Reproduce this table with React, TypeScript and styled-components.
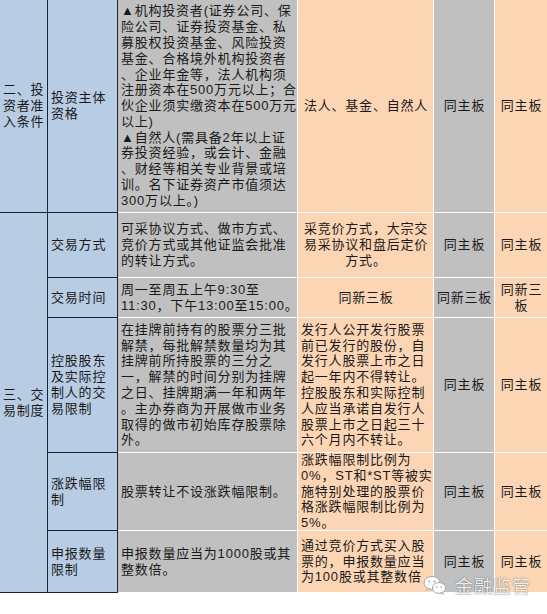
import React from 'react';
import styled, { createGlobalStyle } from 'styled-components';

type Tone = 'blue' | 'gray' | 'peach';

const GlobalStyle = createGlobalStyle`
  html, body {
    margin: 0;
    padding: 0;
    background: #ffffff;
  }
  * {
    box-sizing: border-box;
  }
`;

const DARK = '#1b2238';

const tones: Record<Tone, string> = {
  blue: '#b8cce4',
  gray: '#c0c0c0',
  peach: '#fcd5b4',
};

interface RowData {
  label: string[];
  rule: string[];
  detail: string[];
  detailCenter?: boolean;
  main: string[];
  other: string[];
}

const sections: { title: string[]; rows: RowData[] }[] = [
  {
    title: ['二、投', '资者准', '入条件'],
    rows: [
      {
        label: ['投资主体', '资格'],
        rule: [
          '▲机构投资者(证券公司、保',
          '险公司、证券投资基金、私',
          '募股权投资基金、风险投资',
          '基金、合格境外机构投资者',
          '、企业年金等，法人机构须',
          '注册资本在500万元以上；合',
          '伙企业须实缴资本在500万元',
          '以上)',
          '▲自然人(需具备2年以上证',
          '券投资经验，或会计、金融',
          '、财经等相关专业背景或培',
          '训。名下证券资产市值须达',
          '300万以上。)',
        ],
        detail: ['法人、基金、自然人'],
        detailCenter: true,
        main: ['同主板'],
        other: ['同主板'],
      },
    ],
  },
  {
    title: ['三、交', '易制度'],
    rows: [
      {
        label: ['交易方式'],
        rule: ['可采协议方式、做市方式、', '竞价方式或其他证监会批准', '的转让方式。'],
        detail: ['采竞价方式，大宗交', '易采协议和盘后定价', '方式。'],
        detailCenter: true,
        main: ['同主板'],
        other: ['同主板'],
      },
      {
        label: ['交易时间'],
        rule: ['周一至周五上午9:30至', '11:30，下午13:00至15:00。'],
        detail: ['同新三板'],
        detailCenter: true,
        main: ['同新三板'],
        other: ['同新三', '板'],
      },
      {
        label: ['控股股东', '及实际控', '制人的交', '易限制'],
        rule: [
          '在挂牌前持有的股票分三批',
          '解禁，每批解禁数量均为其',
          '挂牌前所持股票的三分之',
          '一，解禁的时间分别为挂牌',
          '之日、挂牌期满一年和两年',
          '。主办券商为开展做市业务',
          '取得的做市初始库存股票除',
          '外。',
        ],
        detail: [
          '发行人公开发行股票',
          '前已发行的股份，自',
          '发行人股票上市之日',
          '起一年内不得转让。',
          '控股股东和实际控制',
          '人应当承诺自发行人',
          '股票上市之日起三十',
          '六个月内不转让。',
        ],
        main: ['同主板'],
        other: ['同主板'],
      },
      {
        label: ['涨跌幅限', '制'],
        rule: ['股票转让不设涨跌幅限制。'],
        detail: [
          '涨跌幅限制比例为',
          '0%，ST和*ST等被实',
          '施特别处理的股票价',
          '格涨跌幅限制比例为',
          '5%。',
        ],
        main: ['同主板'],
        other: ['同主板'],
      },
      {
        label: ['申报数量', '限制'],
        rule: ['申报数量应当为1000股或其', '整数倍。'],
        detail: ['通过竞价方式买入股', '票的，申报数量应当', '为100股或其整数倍'],
        main: ['同主板'],
        other: ['同主板'],
      },
    ],
  },
];

function Lines({ lines }: { lines: string[] }) {
  return (
    <Text>
      {lines.map((l, i) => (
        <Line key={i}>{l}</Line>
      ))}
    </Text>
  );
}

function WeChatMark() {
  return (
    <svg width="24" height="20" viewBox="0 0 24 20">
      <ellipse cx="9" cy="8" rx="8" ry="6.6" fill="#fbfbfb" stroke="#a9a9a9" strokeWidth="1" />
      <path d="M4.2 12.6 L3.2 15.6 L7 13.6 Z" fill="#fbfbfb" stroke="#a9a9a9" strokeWidth="0.8" />
      <circle cx="6.2" cy="6.4" r="1" fill="#a9a9a9" />
      <circle cx="11.6" cy="6.4" r="1" fill="#a9a9a9" />
      <ellipse cx="16" cy="13" rx="6.6" ry="5.4" fill="#ffffff" stroke="#a9a9a9" strokeWidth="1" />
      <path d="M19.6 17 L20.6 19.4 L17.6 18 Z" fill="#ffffff" stroke="#a9a9a9" strokeWidth="0.8" />
      <circle cx="13.8" cy="11.8" r="0.85" fill="#a9a9a9" />
      <circle cx="18.2" cy="11.8" r="0.85" fill="#a9a9a9" />
    </svg>
  );
}

export default function App() {
  return (
    <>
      <GlobalStyle />
      <Page>
        <Table>
          {sections.map((s) =>
            s.rows.map((r, i) => (
              <React.Fragment key={s.title[0] + i}>
                {i === 0 && (
                  <Cell $tone="blue" $span={s.rows.length}>
                    <Lines lines={s.title} />
                  </Cell>
                )}
                <Cell $tone="blue">
                  <Lines lines={r.label} />
                </Cell>
                <Cell $tone="gray">
                  <Lines lines={r.rule} />
                </Cell>
                <Cell $tone="peach" $center={r.detailCenter}>
                  <Lines lines={r.detail} />
                </Cell>
                <Cell $tone="gray" $center>
                  <Lines lines={r.main} />
                </Cell>
                <Cell $tone="peach" $center $last>
                  <Lines lines={r.other} />
                </Cell>
              </React.Fragment>
            ))
          )}
        </Table>
        <Watermark>
          <WeChatMark />
          <MarkText>金融监管</MarkText>
        </Watermark>
      </Page>
    </>
  );
}

const Page = styled.div`
  position: relative;
  width: 547px;
  height: 614px;
  overflow: hidden;
  background: #ffffff;
  font-family: "Liberation Sans", "Noto Sans CJK SC", sans-serif;
  color: #1a1a1a;
`;

const Table = styled.div`
  display: grid;
  width: 547px;
  grid-template-columns: 48px 70px 180px 136px 61px 1fr;
  grid-template-rows: 213px 65px 40px 135px 78px 62px;
`;

const Cell = styled.div<{ $tone: Tone; $center?: boolean; $last?: boolean; $span?: number }>`
  grid-row: ${(p) => (p.$span ? `span ${p.$span}` : 'auto')};
  display: flex;
  align-items: center;
  justify-content: ${(p) => (p.$center ? 'center' : 'flex-start')};
  text-align: ${(p) => (p.$center ? 'center' : 'left')};
  background: ${(p) => tones[p.$tone]};
  border-right: ${(p) => (p.$last ? 'none' : `1px solid ${p.$tone === 'blue' ? DARK : '#ffffff'}`)};
  border-bottom: 1px solid ${(p) => (p.$tone === 'blue' ? DARK : '#ffffff')};
  padding: 0 2px 0 3px;
  overflow: hidden;
`;

const Text = styled.div`
  font-size: 13px;
  letter-spacing: 0.8px;
  line-height: 15.8px;
  white-space: nowrap;
`;

const Line = styled.div``;

const Watermark = styled.div`
  position: absolute;
  left: 423px;
  top: 572px;
  display: flex;
  align-items: center;
  gap: 8px;
`;

const MarkText = styled.span`
  font-family: "Noto Sans CJK SC", sans-serif;
  font-size: 18px;
  letter-spacing: 1px;
  color: rgba(255, 255, 255, 0.92);
  text-shadow: 0 0 1px rgba(0, 0, 0, 0.55), 0 0 2px rgba(0, 0, 0, 0.2);
`;
